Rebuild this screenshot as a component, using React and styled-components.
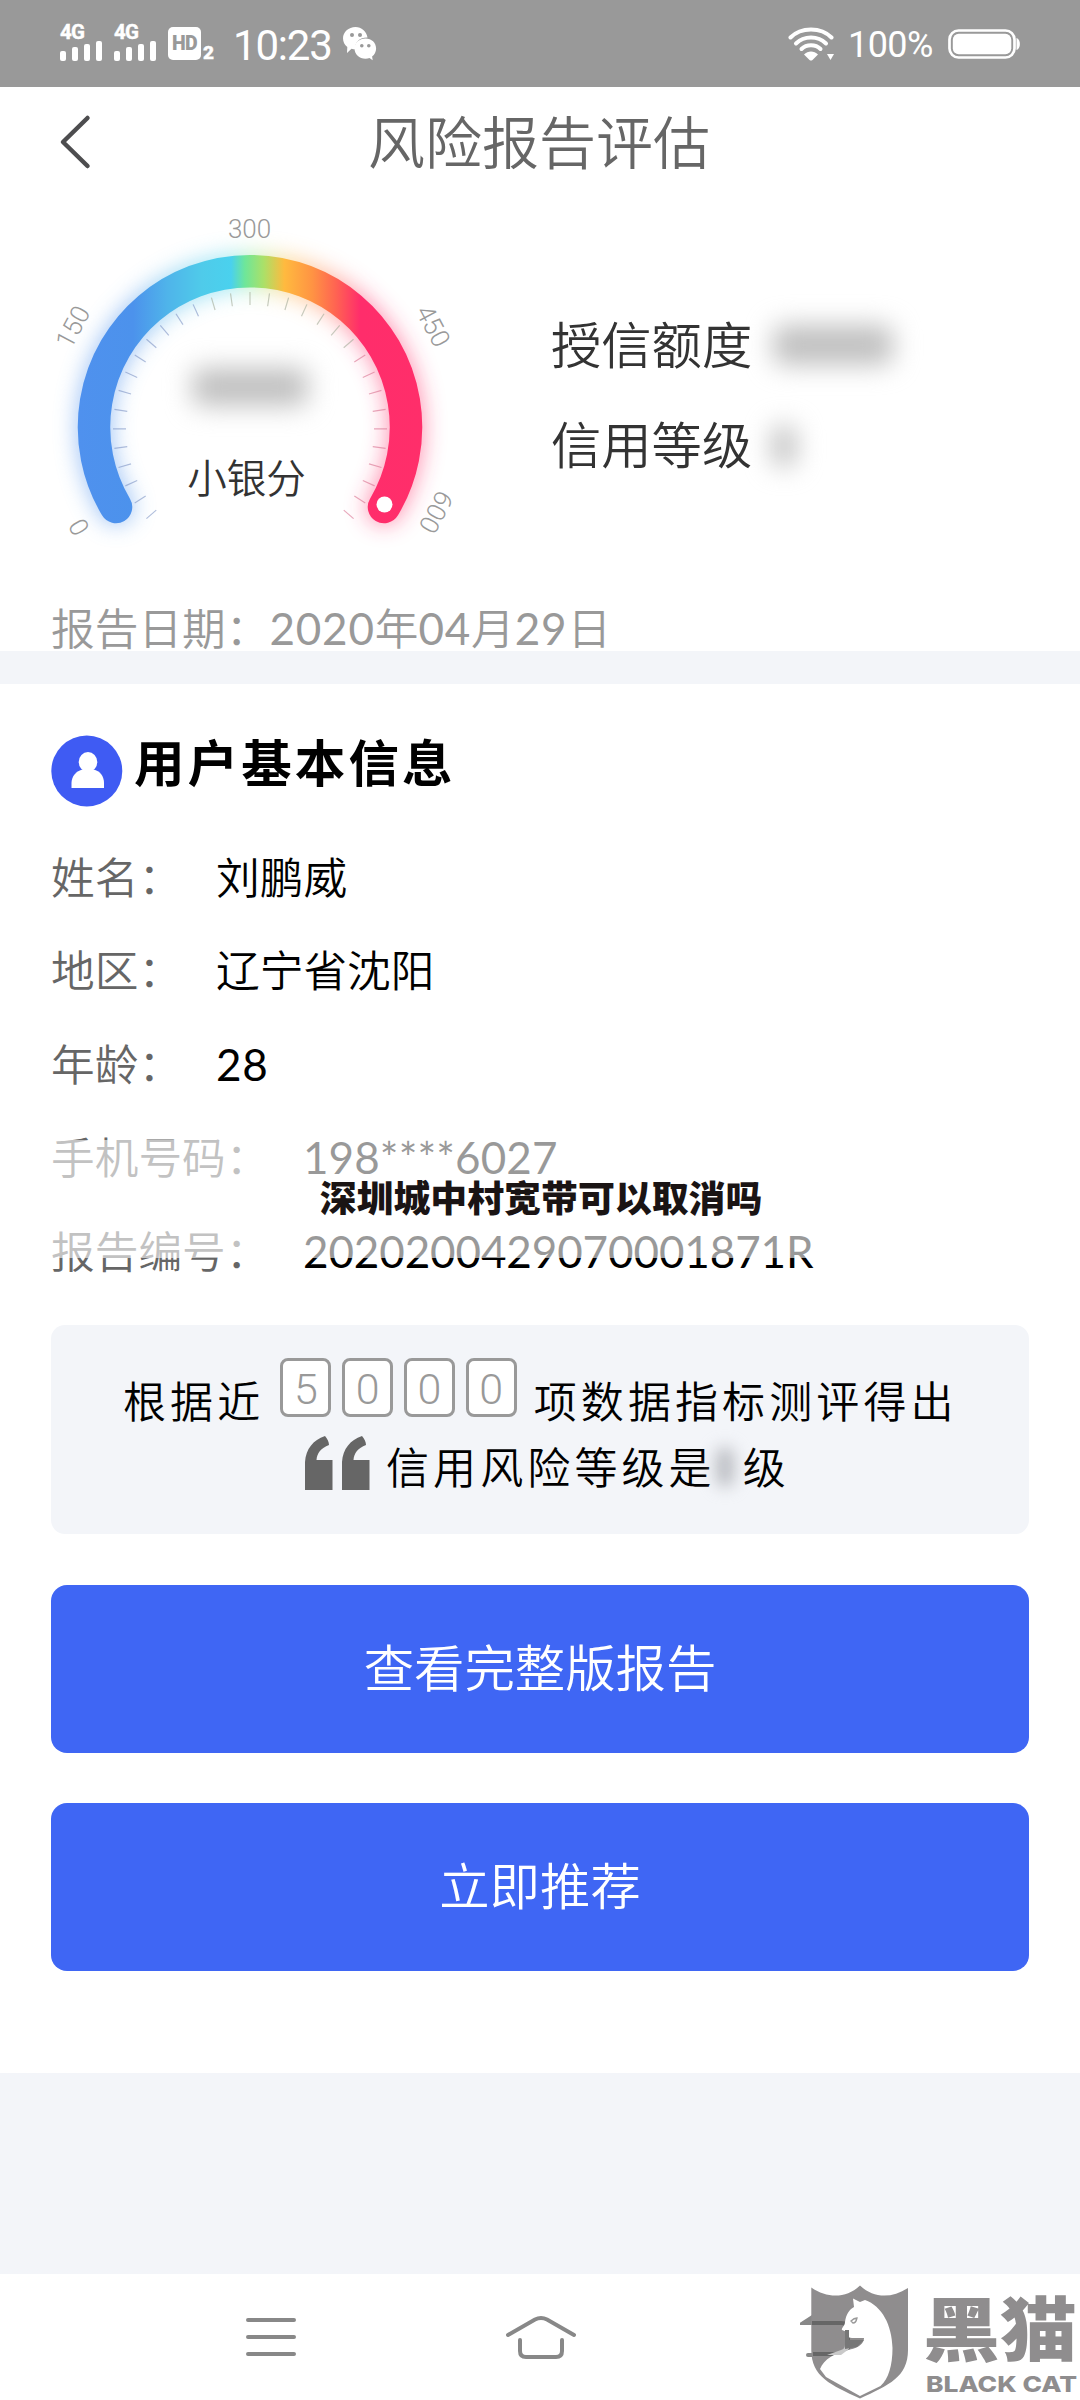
import React from "react";
import styled, { createGlobalStyle } from "styled-components";

const CJK = `"Noto Sans CJK SC", sans-serif`;

const GlobalStyle = createGlobalStyle`
  body { margin: 0; background: #fff; font-family: ${CJK}; }
  * { box-sizing: border-box; }
`;

const Screen = styled.main`
  width: 1080px;
  height: 2400px;
  overflow: hidden;
  display: flex;
  flex-direction: column;
  background: #fff;
  color: #000;
`;

/* ---------- status bar ---------- */
const StatusBar = styled.div`
  height: 87px;
  flex: none;
  background: #999;
  color: #fff;
  display: flex;
  justify-content: space-between;
  padding: 0 60px;
`;
const StatusGroup = styled.div`
  display: flex;
  align-items: center;
  height: 87px;
`;
const Signal = styled.div`
  width: 42px;
  height: 36px;
  margin-right: 12px;
  display: flex;
  flex-direction: column;
  justify-content: space-between;
  margin-top: -4px;
`;
const SignalLabel = styled.span`
  font: 700 20.5px/17px Roboto, sans-serif;
  letter-spacing: -0.8px;
  -webkit-text-stroke: 0.4px #fff;
`;
const Bars = styled.div`
  display: flex;
  gap: 6px;
  align-items: flex-end;
`;
const Bar = styled.i`
  width: 6px;
  height: ${(p) => p.$h}px;
  border-radius: 2px;
  background: #fff;
`;
const HdBadge = styled.span`
  width: 33px;
  height: 33px;
  border-radius: 5px;
  background: #fff;
  color: #999;
  font: 900 19.5px/34px Roboto, sans-serif;
  text-align: center;
  letter-spacing: -0.6px;
`;
const HdIndex = styled.sub`
  font: 900 19px/18px Roboto, sans-serif;
  margin: 19px 0 0 2px;
  width: 30px;
  -webkit-text-stroke: 0.4px #fff;
`;
const Clock = styled.span`
  font: 400 42px/87px Roboto, sans-serif;
  letter-spacing: -1.2px;
  width: 110px;
  margin-top: 3px;
`;
const Percent = styled.span`
  font: 400 36px/87px Roboto, sans-serif;
  letter-spacing: -0.6px;
  width: 101px;
  padding-left: 1px;
  margin-top: 3px;
`;

/* ---------- header ---------- */
const Header = styled.header`
  height: 110px;
  flex: none;
  display: grid;
  grid-template-columns: 150px 1fr 150px;
  align-items: center;
  padding: 0 57px;
`;
const Title = styled.h1`
  margin: -6px 0 0 -2px;
  color: #666;
  font-weight: 350;
  font-size: 57px;
  line-height: 104px;
  text-align: center;
  grid-column: 2;
`;

/* ---------- score ---------- */
const ScoreSection = styled.section`
  height: 454px;
  flex: none;
  display: flex;
  flex-direction: column;
`;
const ScoreRow = styled.div`
  height: 393px;
  display: flex;
`;
const GaugeBox = styled.div`
  width: 551px;
  height: 393px;
  position: relative;
`;
const GaugeSvg = styled.svg`
  display: block;
`;
const GaugeCenter = styled.div`
  position: absolute;
  left: 150px;
  top: 171px;
  width: 200px;
  display: flex;
  flex-direction: column;
  align-items: center;
  gap: 40px;
`;
const GaugeCaption = styled.span`
  font-size: 39.5px;
  line-height: 60px;
  font-weight: 350;
  color: #333;
  margin-left: -7px;
`;
const Masked = styled.span`
  flex: none;
  width: ${(p) => p.$w}px;
  height: ${(p) => p.$h}px;
  margin-left: ${(p) => p.$ml || 0}px;
  margin-top: ${(p) => p.$mt || 0}px;
  border-radius: 10px;
  background: ${(p) => p.$c || "#c0c0c0"};
  filter: blur(${(p) => p.$b || 13}px);
`;
const Facts = styled.div`
  padding-top: 95px;
`;
const Fact = styled.div`
  height: 100px;
  display: flex;
  align-items: center;
  font-size: 50.3px;
  line-height: 100px;
  font-weight: 350;
  color: #333;
`;
const DateLine = styled.div`
  padding-left: 51px;
  font-size: 43.7px;
  line-height: 72px;
  font-weight: 350;
  color: #999;
  white-space: nowrap;
`;
const Digits = styled.span`
  font-family: Lato, ${CJK};
  font-weight: 400;
  line-height: 1;
  font-size: ${(p) => p.$size || 44}px;
  letter-spacing: ${(p) => p.$ls ?? 0.8}px;
`;
const Divider = styled.div`
  height: 33px;
  flex: none;
  background: #f3f5f9;
`;

/* ---------- user info ---------- */
const InfoSection = styled.section`
  flex: none;
  height: 1389px;
  padding: 0 51px;
  display: flex;
  flex-direction: column;
  position: relative;
`;
const SectionHead = styled.div`
  height: 144.5px;
  flex: none;
  display: flex;
  align-items: flex-start;
  padding-top: 51px;
`;
const SectionTitle = styled.h2`
  margin: -13px 0 0 11px;
  font-size: 50.5px;
  line-height: 76px;
  letter-spacing: 3.1px;
  font-weight: 700;
`;
const InfoRow = styled.div`
  display: flex;
  align-items: baseline;
  font-size: 43.7px;
  line-height: 93.6px;
  height: 93.6px;
  flex: none;
  font-weight: 350;
  white-space: nowrap;
`;
const Label = styled.span`
  color: #666;
  width: ${(p) => (p.$wide ? 252 : 165)}px;
`;
const Value = styled.span`
  color: #000;
`;
const Banner = styled.div`
  position: absolute;
  left: 0;
  top: 456px;
  width: 1080px;
  height: 118px;
  background: rgba(255, 255, 255, 0.6);
  color: #1a1414;
  font-size: 36.9px;
  font-weight: 900;
  line-height: 112px;
  text-align: center;
  padding-left: 2px;
`;
const Card = styled.div`
  margin-top: 29px;
  height: 209px;
  flex: none;
  border-radius: 14px;
  background: #f3f5f9;
  padding-top: 33px;
`;
const CardLine = styled.div`
  display: flex;
  align-items: center;
  height: ${(p) => p.$h}px;
  padding-left: ${(p) => p.$pl}px;
  font-size: 43px;
  line-height: 65px;
  letter-spacing: 4.1px;
  font-weight: 350;
  white-space: nowrap;
`;
const Counter = styled.div`
  display: flex;
  gap: 10.8px;
  margin: -25px 17px 0 16px;
`;
const CounterCell = styled.span`
  width: 51px;
  height: 59px;
  border: 3px solid #999;
  border-radius: 8px;
  background: #fff;
  color: #999;
  font: 300 43px/57px Roboto, sans-serif;
  letter-spacing: 0;
  text-align: center;
`;
const QuoteMark = styled.svg`
  margin: -4px 16px 0 0;
`;
const GradeSuffix = styled.span`
  margin-left: 9px;
`;
const Button = styled.button`
  border: 0;
  padding: 0 0 6px;
  flex: none;
  width: 978px;
  height: 168px;
  margin-top: ${(p) => p.$mt}px;
  border-radius: 16px;
  background: #3f66f4;
  color: #fff;
  font: 350 50.4px/162px ${CJK};
`;
const Filler = styled.div`
  flex: none;
  height: 201px;
  background: #f3f5f9;
`;

/* ---------- navigation ---------- */
const NavBar = styled.nav`
  flex: 1;
  display: flex;
  position: relative;
  padding: 0 136px;
`;
const NavItem = styled.div`
  width: 270px;
  height: 126px;
  display: flex;
  justify-content: center;
  align-items: center;
`;
const Watermark = styled.div`
  position: absolute;
  left: 800px;
  top: -1px;
  width: 280px;
  height: 127px;
`;

const Wechat = () => (
  <svg width="34" height="34" viewBox="0 0 34 34">
    <path d="M12.5 0C5.6 0 0 5 0 11.3c0 3.500 1.600 6.600 4.300 8.700L4 26l4.500-4.200c1.500.4 2.500.5 3.600.5C11.500 15 17 10.300 24.500 10.500 23.500 4.300 18.500 0 12.500 0Z" fill="#fff" />
    <path d="M22.500 11.500c-6.200 0-11 4.300-11 10 0 5.800 4.800 10.300 11 10.300 1.500 0 2.800-.3 4-.7l3.200 2.200-.6-3.800c2.500-1.900 4-4.800 4-8 0-5.700-4.500-10-10.600-10Z" fill="#fff" />
    <g fill="#999"><circle cx="9" cy="8" r="2" /><circle cx="17" cy="8" r="2" /><circle cx="18.800" cy="18.800" r="1.800" /><circle cx="25.800" cy="18.800" r="1.800" /></g>
  </svg>
);

const Wifi = () => (
  <svg width="59" height="34" viewBox="0 0 59 34">
    <g fill="none" stroke="#fff" strokeWidth="4" strokeLinecap="round">
      <path d="M2.500 10.500C13-.2 33-.2 43.500 10.500" />
      <path d="M8 16.500c8-8 22-8 30 0" />
      <path d="M13.500 22c5-5 14-5 19 0" />
    </g>
    <path d="M16 27.500c4-4 10-4 14 0l-5.500 5.500q-1.500 1-3 0Z" fill="#fff" />
    <path d="M39 27h7l-3.500 6Z" fill="#fff" />
  </svg>
);

const Battery = () => (
  <svg width="72" height="30" viewBox="0 0 72 30">
    <rect x="1.500" y="1.500" width="65" height="27" rx="9" fill="none" stroke="#fff" strokeWidth="2.700" />
    <rect x="4.800" y="4.800" width="58.500" height="20.500" rx="6" fill="#fff" />
    <path d="M68.500 9c4.500 1 4.500 11 0 12Z" fill="#fff" />
  </svg>
);

const TICKS = Array.from({ length: 33 }, (_, i) => i - 16);
const ARC = "M116 310A156 156 0 1 1 384 310";

const Gauge = () => (
  <GaugeSvg width="551" height="393" viewBox="0 0 551 393">
    <defs>
      <linearGradient id="ring" gradientUnits="userSpaceOnUse" x1="78" y1="0" x2="422" y2="0">
        <stop offset="0" stopColor="#4f91ee" />
        <stop offset=".16" stopColor="#4c92ec" />
        <stop offset=".26" stopColor="#4fb4ea" />
        <stop offset=".36" stopColor="#4fcbea" />
        <stop offset=".445" stopColor="#4ad1ee" />
        <stop offset=".485" stopColor="#6ee69a" />
        <stop offset=".54" stopColor="#abe068" />
        <stop offset=".6" stopColor="#ffba3f" />
        <stop offset=".68" stopColor="#ff9443" />
        <stop offset=".75" stopColor="#ff6352" />
        <stop offset=".82" stopColor="#ff2d6b" />
        <stop offset="1" stopColor="#ff2e6a" />
      </linearGradient>
      <filter id="glow" filterUnits="userSpaceOnUse" x="0" y="0" width="551" height="393">
        <feGaussianBlur stdDeviation="11" />
      </filter>
    </defs>
    <path d={ARC} fill="none" stroke="url(#ring)" strokeWidth="36" strokeLinecap="round" filter="url(#glow)" opacity=".5" />
    {TICKS.map((t) => (
      <line key={t} x1="250" y1="95" x2="250" y2="108" strokeWidth="1.200"
        stroke={t < -2 ? "#7d93c4" : t > 6 ? "#d8708f" : "#a3ab98"} opacity=".6"
        transform={`rotate(${t * 8.18} 250 232)`} />
    ))}
    <path d={ARC} fill="none" stroke="url(#ring)" strokeWidth="32.500" strokeLinecap="round" />
    <circle cx="384.500" cy="307.500" r="8" fill="#fff" />
    <g fill="#999" fontFamily="Roboto, sans-serif" fontWeight="300" fontSize="26" textAnchor="middle">
      <text transform="translate(249.500 32)" dy="9">300</text>
      <text transform="translate(73 130) rotate(-62)" dy="9">150</text>
      <text transform="translate(433 129) rotate(62)" dy="9">450</text>
      <text transform="translate(79 330) rotate(-120)" dy="9">0</text>
      <text transform="translate(436 315) rotate(118)" dy="9">600</text>
    </g>
  </GaugeSvg>
);

const BackArrow = () => (
  <svg width="36" height="56" viewBox="0 0 36 56">
    <path d="M30.500 4 6 28l24.500 24" fill="none" stroke="#4d4d4f" strokeWidth="4.500" strokeLinecap="round" strokeLinejoin="round" />
  </svg>
);

const UserIcon = () => (
  <svg width="72" height="72" viewBox="0 0 72 72">
    <circle cx="35.800" cy="36" r="35.500" fill="#3f5bf3" />
    <ellipse cx="37" cy="27" rx="9.300" ry="10" fill="#fff" />
    <path d="M20.500 53V48c0-7 5-12 11-13.500h11C49 36 53 41 53 48v5Z" fill="#fff" />
  </svg>
);

const QuoteIcon = () => (
  <QuoteMark width="65" height="54" viewBox="0 0 65 54">
    {[0, 37].map((x) => (
      <path key={x} transform={`translate(${x} 0)`} fill="#666" d="M0 54V26C1 13 8 4 20 0c2.500 3 4 6 4 9-8 3-12 8-12.500 15H27.500V54Z" />
    ))}
  </QuoteMark>
);

const MenuIcon = () => (
  <svg width="50" height="38" viewBox="0 0 50 38">
    <path d="M2 2h46M2 19h46M2 36h46" stroke="#888" strokeWidth="4" strokeLinecap="round" />
  </svg>
);
const HomeIcon = () => (
  <svg width="72" height="46" viewBox="0 0 72 46">
    <path d="M3 21 30 5.500q6-3 12 0L69 21M15 26v11q0 6 6 6h30q6 0 6-6V26" fill="none" stroke="#888" strokeWidth="4" strokeLinecap="round" />
  </svg>
);

const Logo = () => (
  <svg width="280" height="127" viewBox="0 0 280 127">
    <path d="M8 82h6" fill="none" stroke="#888" strokeWidth="4" strokeLinecap="round" />
    <path d="M-2 51 12 42v10H-1Z" fill="#888" />
    <path d="M11.300 14.500C28 26 47 25 60 12.500 73 25 91 26 108 15v62c0 27-19 35-48 48.500C31 112 11.300 104 11.300 77Z" fill="#8f8d8e" />
    <path d="M12 50h29q7 0 7 7v17q0 7-7 7H13" fill="none" stroke="#666" strokeWidth="4" />
    <path d="M53 25.500 60 29l5-2C82 33 92 52 92.500 75c0 17-4 31-12 38L60 123 26 104l-6-8C24 86 35 80 50 76.500c9-2 14-6 14-11.500H52c-4 0-6-3-5-6l-5-2c-1-2 3-4 3-8 1-8 5-13 9-15Z" fill="#fff" />
    <path d="M45 62h4v14l-8 6H27l14-5q4-1 4-5Z" fill="#c9c9c9" />
    <path d="M45 57h4v10h15l-7 7-12 2Z" fill="#777" />
    <path d="M51 48q3-3 6-3-1 5-4 5Z" fill="none" stroke="#999" strokeWidth="1.300" />
    <text transform="translate(123 83) scale(1 .91)" fill="#8f8d8e" fontFamily={CJK} fontWeight="900" fontSize="77">黑猫</text>
    <text x="126" y="119" fill="#8f8d8e" fontFamily="Inter, sans-serif" fontWeight="800" fontSize="22" textLength="151" lengthAdjust="spacingAndGlyphs">BLACK CAT</text>
  </svg>
);

const SignalIcon = () => (
  <Signal>
    <SignalLabel>4G</SignalLabel>
    <Bars>{[10, 14, 17, 20].map((h) => <Bar key={h} $h={h} />)}</Bars>
  </Signal>
);

const ROWS = [
  { label: "姓名：", value: "刘鹏威" },
  { label: "地区：", value: "辽宁省沈阳" },
  { label: "年龄：", value: <Digits>28</Digits> },
  { label: "手机号码：", value: <Digits $ls={0.1}>198****6027</Digits>, wide: true },
  { label: "报告编号：", value: <Digits $ls={-0.1}>2020200429070001871R</Digits>, wide: true },
];

export default function App() {
  return (
    <Screen>
      <GlobalStyle />
      <StatusBar>
        <StatusGroup>
          <SignalIcon />
          <SignalIcon />
          <HdBadge>HD</HdBadge>
          <HdIndex>2</HdIndex>
          <Clock>10:23</Clock>
          <Wechat />
        </StatusGroup>
        <StatusGroup>
          <Wifi />
          <Percent>100%</Percent>
          <Battery />
        </StatusGroup>
      </StatusBar>
      <Header>
        <BackArrow />
        <Title>风险报告评估</Title>
      </Header>
      <ScoreSection>
        <ScoreRow>
          <GaugeBox>
            <Gauge />
            <GaugeCenter>
              <Masked $w={116} $h={38} />
              <GaugeCaption>小银分</GaugeCaption>
            </GaugeCenter>
          </GaugeBox>
          <Facts>
            <Fact>授信额度<Masked $w={120} $h={40} $ml={21} $mt={5} /></Fact>
            <Fact>信用等级<Masked $w={24} $h={42} $ml={20} $mt={7} /></Fact>
          </Facts>
        </ScoreRow>
        <DateLine>
          报告日期：<Digits>2020</Digits>年<Digits>04</Digits>月<Digits>29</Digits>日
        </DateLine>
      </ScoreSection>
      <Divider />
      <InfoSection>
        <SectionHead>
          <UserIcon />
          <SectionTitle>用户基本信息</SectionTitle>
        </SectionHead>
        {ROWS.map((r) => (
          <InfoRow key={r.label}>
            <Label $wide={r.wide}>{r.label}</Label>
            <Value>{r.value}</Value>
          </InfoRow>
        ))}
        <Banner>深圳城中村宽带可以取消吗</Banner>
        <Card>
          <CardLine $h={83} $pl={72}>
            <span>根据近</span>
            <Counter>
              {["5", "0", "0", "0"].map((d, i) => <CounterCell key={i}>{d}</CounterCell>)}
            </Counter>
            <span>项数据指标测评得出</span>
          </CardLine>
          <CardLine $h={48} $pl={254}>
            <QuoteIcon />
            <span>信用风险等级是</span>
            <Masked $w={18} $h={40} $b={8} $mt={4} $c="#babcc1" />
            <GradeSuffix>级</GradeSuffix>
          </CardLine>
        </Card>
        <Button $mt={51}>查看完整版报告</Button>
        <Button $mt={50}>立即推荐</Button>
      </InfoSection>
      <Filler />
      <NavBar>
        <NavItem><MenuIcon /></NavItem>
        <NavItem><HomeIcon /></NavItem>
        <Watermark><Logo /></Watermark>
      </NavBar>
    </Screen>
  );
}
